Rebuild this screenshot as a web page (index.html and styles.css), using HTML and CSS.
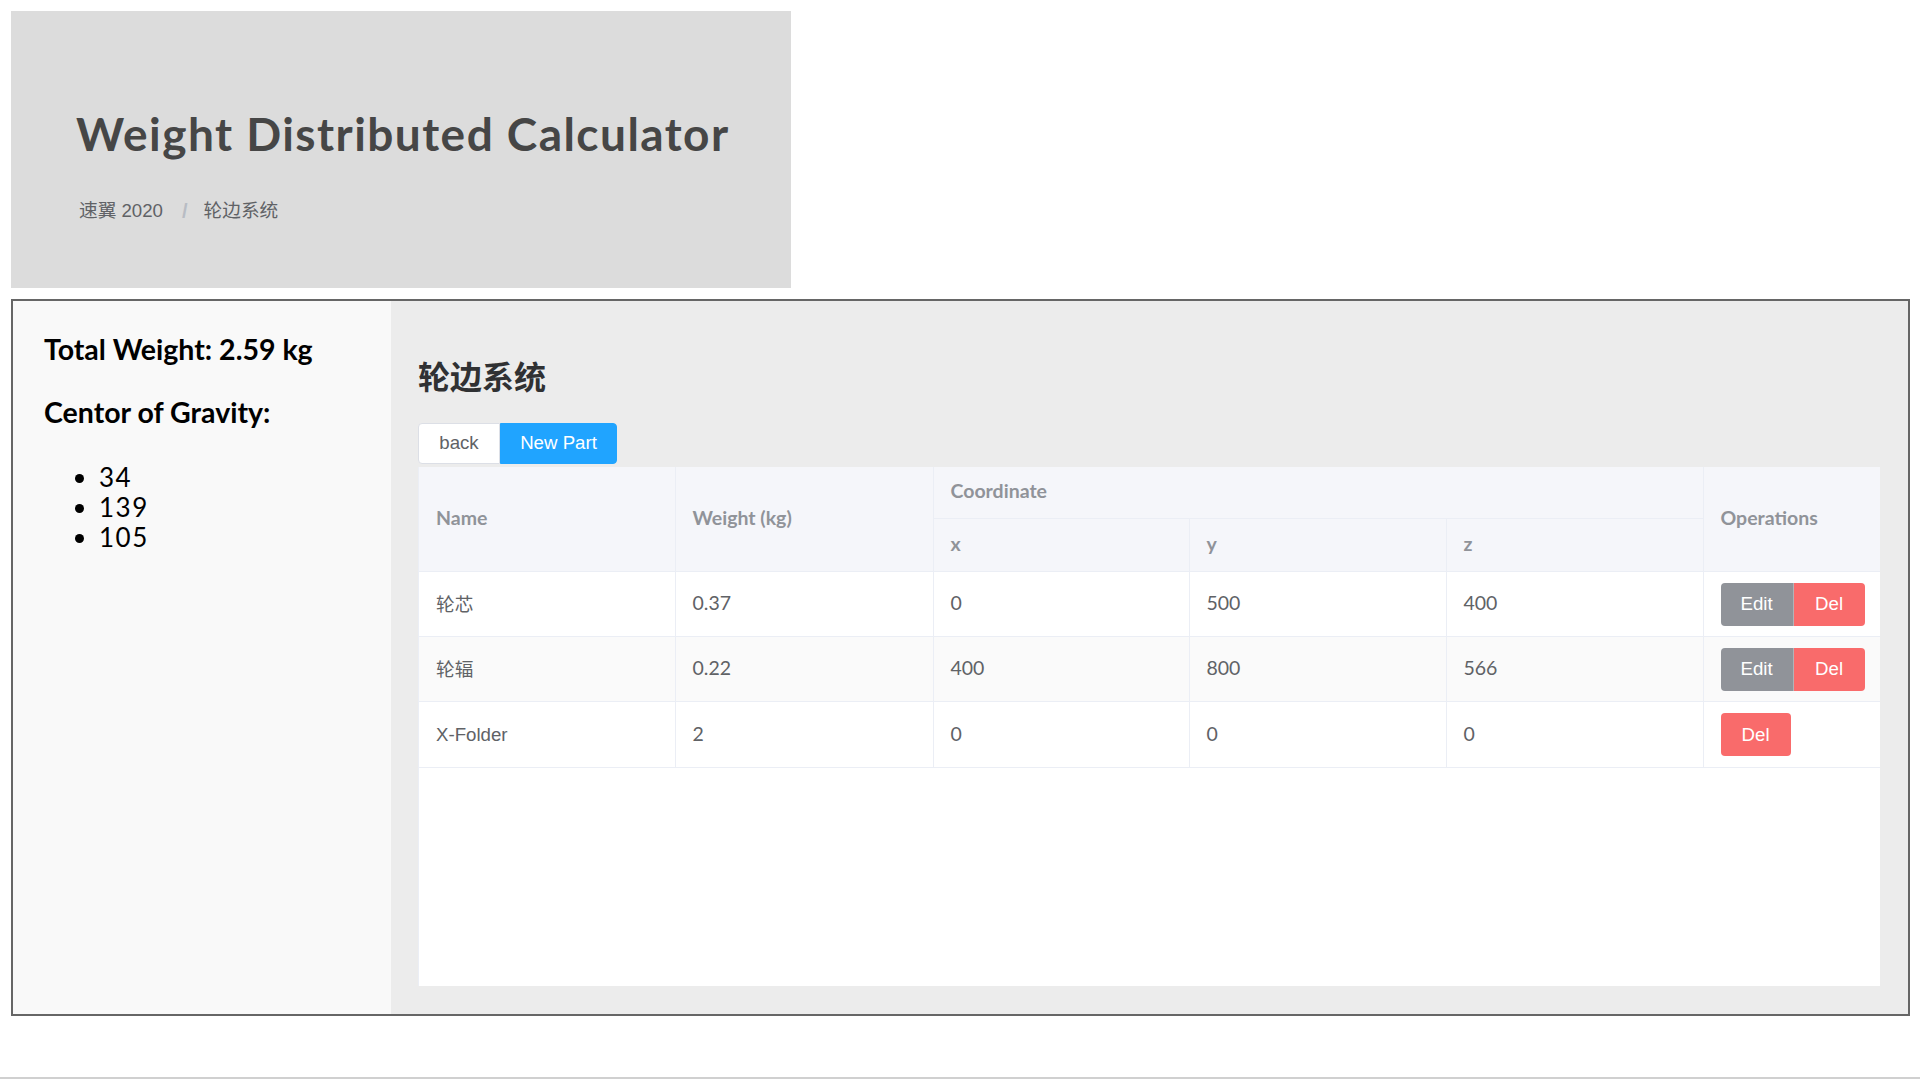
FILE: index.html
```html
<!DOCTYPE html>
<html lang="zh-CN">
<head>
<meta charset="utf-8">
<title>Weight Distributed Calculator</title>
<link rel="stylesheet" href="styles.css">
</head>
<body>
<div class="page">
  <header class="hero">
    <h1 class="hero-title">Weight Distributed Calculator</h1>
    <nav class="crumbs">
      <span class="crumb">速翼 2020</span>
      <span class="crumb-sep">/</span>
      <span class="crumb">轮边系统</span>
    </nav>
  </header>

  <section class="panel">
    <aside class="sidebar">
      <h3 class="side-title">Total Weight: 2.59 kg</h3>
      <h3 class="side-title side-title-2">Centor of Gravity:</h3>
      <ul class="cog">
        <li>34</li>
        <li>139</li>
        <li>105</li>
      </ul>
    </aside>

    <main class="main">
      <h2 class="main-title">轮边系统</h2>
      <div class="btn-group">
        <button class="btn btn-plain">back</button>
        <button class="btn btn-primary">New Part</button>
      </div>
      <div class="table-wrap">
        <table class="parts">
          <colgroup>
            <col class="c-name">
            <col class="c-weight">
            <col class="c-x">
            <col class="c-y">
            <col class="c-z">
            <col class="c-ops">
          </colgroup>
          <thead>
            <tr class="hrow-1">
              <th rowspan="2">Name</th>
              <th rowspan="2">Weight (kg)</th>
              <th colspan="3">Coordinate</th>
              <th rowspan="2" class="last">Operations</th>
            </tr>
            <tr class="hrow-2">
              <th>x</th>
              <th>y</th>
              <th>z</th>
            </tr>
          </thead>
          <tbody>
            <tr>
              <td class="name">轮芯</td>
              <td class="num">0.37</td>
              <td class="num">0</td>
              <td class="num">500</td>
              <td class="num">400</td>
              <td class="last">
                <div class="ops"><button class="op op-edit">Edit</button><button class="op op-del">Del</button></div>
              </td>
            </tr>
            <tr class="striped">
              <td class="name">轮辐</td>
              <td class="num">0.22</td>
              <td class="num">400</td>
              <td class="num">800</td>
              <td class="num">566</td>
              <td class="last">
                <div class="ops"><button class="op op-edit">Edit</button><button class="op op-del">Del</button></div>
              </td>
            </tr>
            <tr class="tall">
              <td class="name latin">X-Folder</td>
              <td class="num">2</td>
              <td class="num">0</td>
              <td class="num">0</td>
              <td class="num">0</td>
              <td class="last">
                <div class="ops"><button class="op op-del op-single">Del</button></div>
              </td>
            </tr>
          </tbody>
        </table>
      </div>
    </main>
  </section>

  <footer class="footer"></footer>
</div>
</body>
</html>
```

FILE: styles.css
```css
html, body {
  margin: 0;
  padding: 0;
  background: #ffffff;
}

body {
  font-family: "Liberation Sans", "Noto Sans CJK SC", sans-serif;
  color: #606266;
}

.page {
  padding: 11px 10px 0 11px;
}

/* ---------- hero ---------- */
.hero {
  width: 780px;
  height: 277px;
  box-sizing: border-box;
  background: #dcdcdc;
  padding: 96px 0 0 65px;
}

.hero-title {
  margin: 0;
  font-family: "Lato", "DejaVu Sans", sans-serif;
  font-weight: 700;
  font-size: 46px;
  line-height: 53px;
  color: #464646;
  letter-spacing: 1.45px;
}

.crumbs {
  margin-top: 40px;
  display: flex;
  align-items: center;
  font-size: 18.67px;
  line-height: 22px;
  padding-left: 3px;
}

.crumb {
  color: #606266;
}

.crumb-sep {
  margin: 0 16px 0 19px;
  color: #b8bcc4;
  font-weight: 700;
  font-size: 20px;
}

/* ---------- panel ---------- */
.panel {
  margin-top: 11px;
  height: 717px;
  box-sizing: border-box;
  border: 2px solid #666666;
  display: flex;
}

.sidebar {
  width: 378px;
  flex: none;
  background: #f9f9f9;
  padding: 31px 0 0 31px;
  box-sizing: border-box;
  color: #000000;
}

.side-title {
  margin: 0;
  font-family: "Lato", "DejaVu Sans", sans-serif;
  font-weight: 700;
  font-size: 28.5px;
  line-height: 34px;
}

.side-title-2 {
  margin-top: 29px;
}

.cog {
  margin: 33px 0 0 0;
  padding-left: 55px;
  font-family: "Lato", "DejaVu Sans", sans-serif;
  font-size: 26px;
  line-height: 30px;
  letter-spacing: 1.5px;
}

.main {
  flex: 1;
  background: #ececec;
  padding: 54px 28px 28px 27px;
  display: flex;
  flex-direction: column;
  min-width: 0;
}

.main-title {
  margin: 0 0 28px 0;
  font-family: "Noto Sans CJK SC", sans-serif;
  font-size: 32px;
  font-weight: 700;
  line-height: 40px;
  color: #303133;
}

.btn-group {
  display: flex;
}

.btn {
  height: 41px;
  box-sizing: border-box;
  padding: 0 18px;
  font-family: "Liberation Sans", sans-serif;
  font-size: 18.67px;
  line-height: 1;
  white-space: nowrap;
  border: 1px solid #dcdfe6;
  cursor: pointer;
}

.btn-plain {
  background: #ffffff;
  color: #606266;
  border-radius: 4px 0 0 4px;
  width: 82px;
}

.btn-primary {
  background: #20a4ff;
  border-color: #20a4ff;
  color: #ffffff;
  border-radius: 0 4px 4px 0;
  width: 117px;
}

/* ---------- table ---------- */
.table-wrap {
  margin-top: 3px;
  flex: 1;
  background: #ffffff;
  border-left: 1px solid #ebeef5;
}

.parts {
  width: 100%;
  border-collapse: collapse;
  table-layout: fixed;
}

.c-name { width: 256px; }
.c-weight { width: 258px; }
.c-x { width: 256px; }
.c-y { width: 257px; }
.c-z { width: 257px; }
.c-ops { width: auto; }

.parts th,
.parts td {
  border-bottom: 1px solid #ebeef5;
  border-right: 1px solid #ebeef5;
  padding: 0 10px 0 17px;
  text-align: left;
  vertical-align: middle;
}

.parts th.last,
.parts td.last {
  border-right: none;
}

.parts th {
  background: #f5f6fa;
  color: #909399;
  font-family: "Lato", "DejaVu Sans", sans-serif;
  font-weight: 700;
  font-size: 19.5px;
  padding-bottom: 4px;
}

.hrow-1 th { height: 47px; }
.hrow-2 th { height: 48px; }

.parts tbody tr { height: 65px; }
.parts tbody tr.tall { height: 66px; }
.parts tbody tr.striped td { background: #fafafa; }

.parts td {
  color: #606266;
  font-size: 18.67px;
}

.parts td.name {
  font-family: "Liberation Sans", "Noto Sans CJK SC", sans-serif;
  padding-bottom: 3px;
}

.parts td.name.latin {
  padding-bottom: 0;
}

.parts td.num {
  font-family: "Lato", "DejaVu Sans", sans-serif;
  font-size: 19.5px;
  padding-bottom: 3px;
}

.ops {
  display: flex;
}

.op {
  height: 43px;
  border: none;
  color: #ffffff;
  font-family: "Liberation Sans", sans-serif;
  font-size: 18.67px;
  padding: 0;
  cursor: pointer;
}

.op-edit {
  width: 73px;
  background: #909399;
  border-radius: 4px 0 0 4px;
  border-right: 1px solid rgba(255, 255, 255, 0.3);
}

.op-del {
  width: 71px;
  background: #f96b6b;
  border-radius: 0 4px 4px 0;
}

.op-single {
  width: 70px;
  border-radius: 4px;
}

/* ---------- footer ---------- */
.footer {
  margin: 61px -10px 0 -11px;
  border-top: 2px solid #d0d0d0;
  height: 20px;
}
```
